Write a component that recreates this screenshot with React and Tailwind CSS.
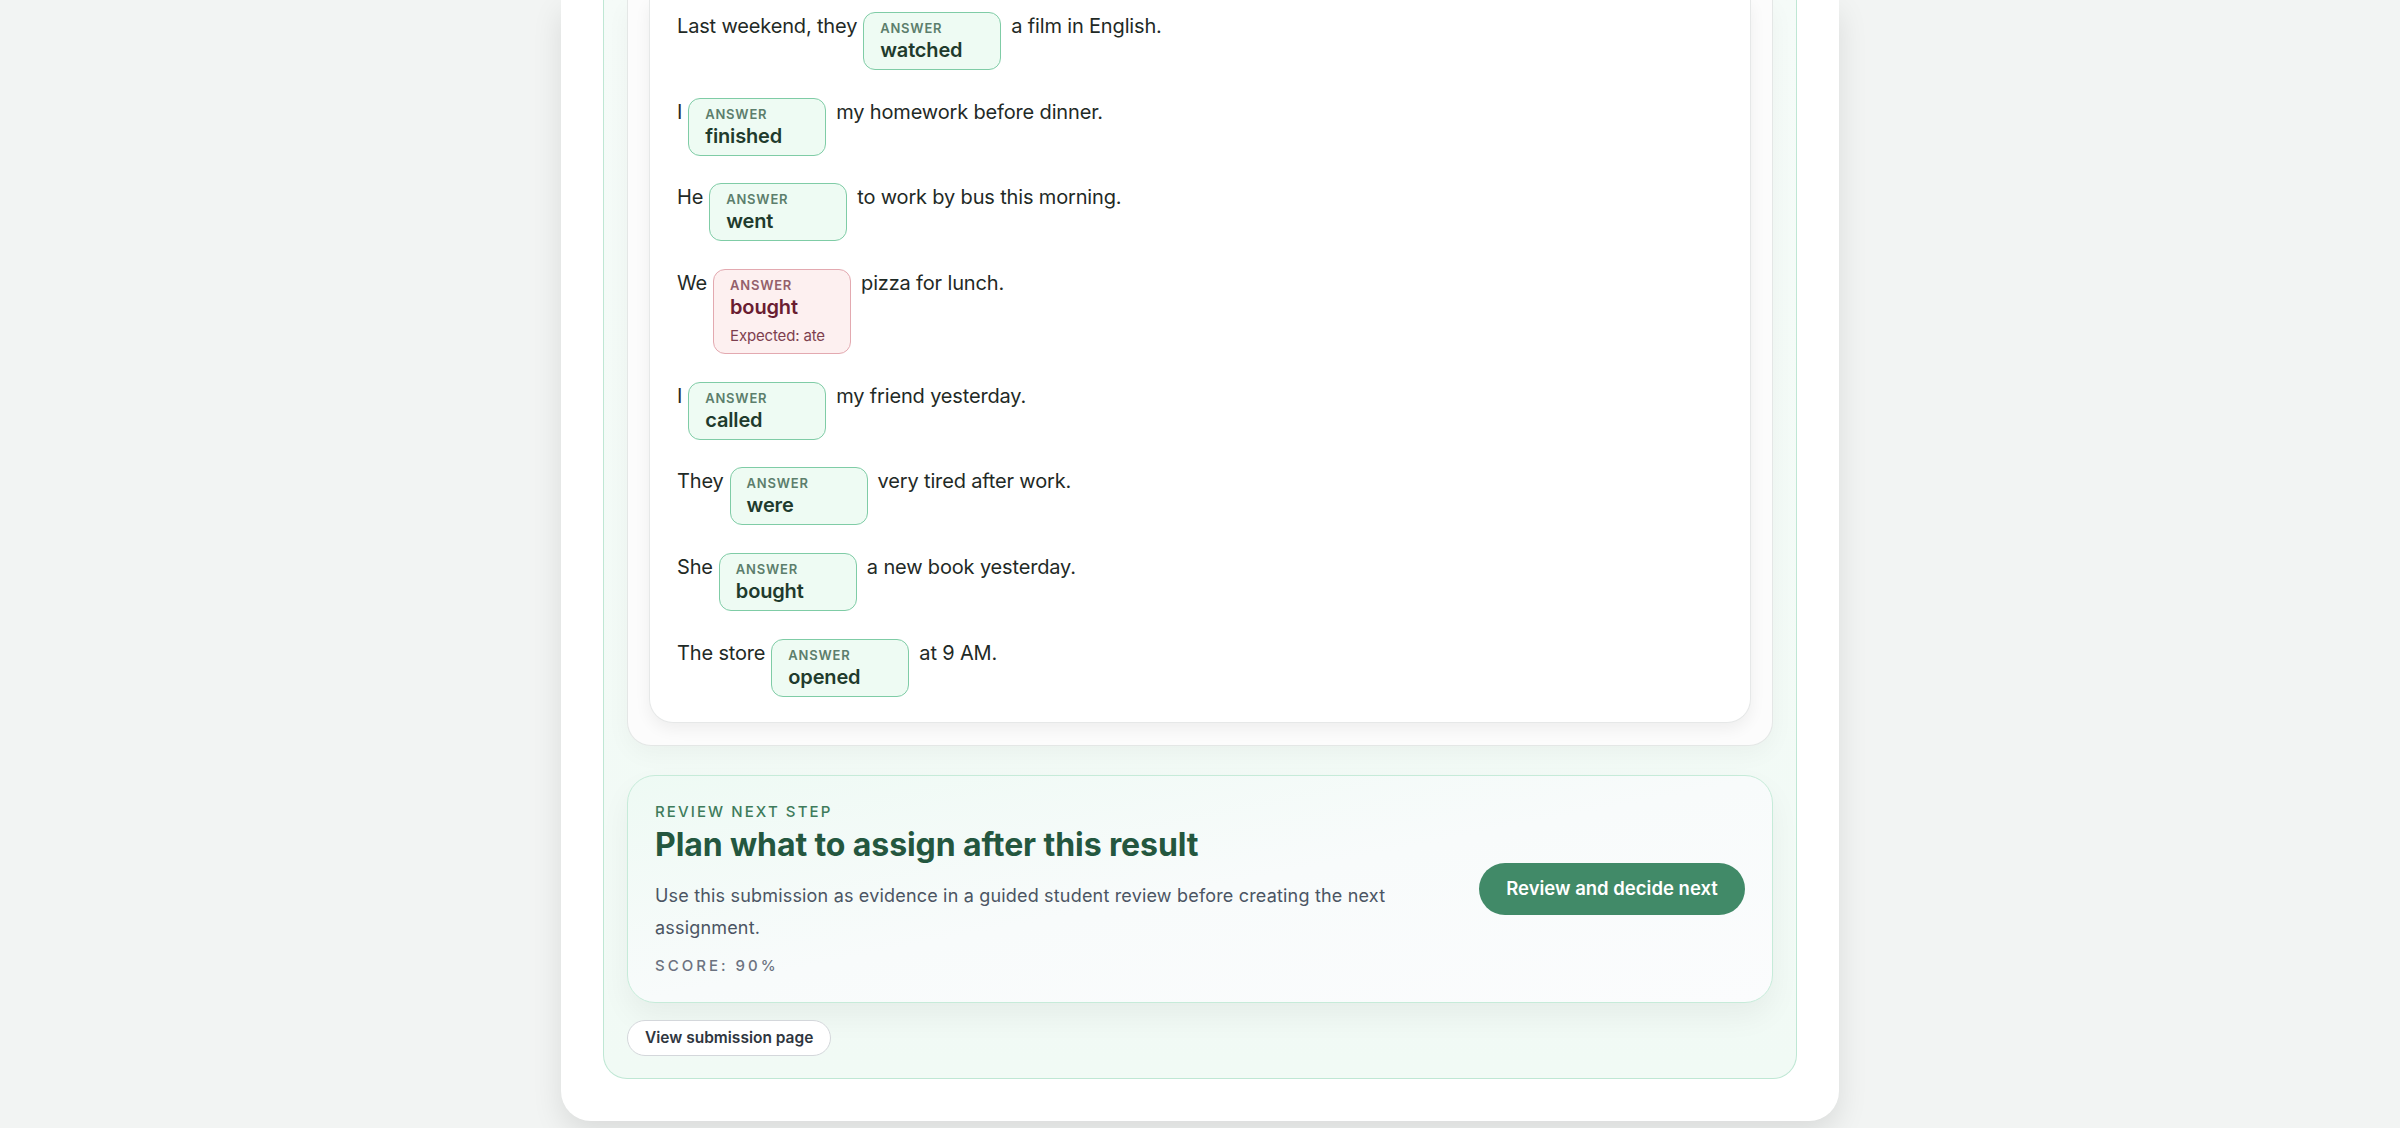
import React from 'react';

const sentences = [
  { before: 'Last weekend, they', answer: 'watched', after: 'a film in English.' },
  { before: 'I', answer: 'finished', after: 'my homework before dinner.' },
  { before: 'He', answer: 'went', after: 'to work by bus this morning.' },
  { before: 'We', answer: 'bought', after: 'pizza for lunch.', expected: 'ate' },
  { before: 'I', answer: 'called', after: 'my friend yesterday.' },
  { before: 'They', answer: 'were', after: 'very tired after work.' },
  { before: 'She', answer: 'bought', after: 'a new book yesterday.' },
  { before: 'The store', answer: 'opened', after: 'at 9 AM.' },
];

const AnswerChip = ({ answer, expected }) => {
  const wrong = Boolean(expected);
  return (
    <div
      className={
        wrong
          ? 'w-[138px] shrink-0 rounded-[12px] border border-[#e3a9b0] bg-[#fdf0f0] px-4 pt-[7px] pb-[6px] mr-1'
          : 'w-[138px] shrink-0 rounded-[12px] border border-[#7fcca6] bg-[#eefbf3] px-4 pt-[7px] pb-[6px] mr-1'
      }
    >
      <div
        className={
          wrong
            ? 'text-[13px] leading-4 font-semibold tracking-[0.06em] text-[#94606b]'
            : 'text-[13px] leading-4 font-semibold tracking-[0.06em] text-[#5c7e6c]'
        }
      >
        ANSWER
      </div>
      <div
        className={
          wrong
            ? 'mt-px text-[20px] leading-[26px] font-semibold text-[#6a1d31]'
            : 'mt-px text-[20px] leading-[26px] font-semibold text-[#1f3b2d]'
        }
      >
        {answer}
      </div>
      {wrong && (
        <div className="mt-[5px] text-[15px] leading-[22px] text-[#7d3f4f]">
          Expected: {expected}
        </div>
      )}
    </div>
  );
};

export default function App() {
  return (
    <div
      className="min-h-screen bg-[#f2f4f3] text-[#1f2a26]"
      style={{ fontFamily: 'Inter, "Noto Sans", sans-serif' }}
    >
      <div className="mx-auto w-[1278px] rounded-b-[30px] bg-white px-[42px] pb-[42px] shadow-[0_12px_30px_rgba(0,0,0,0.10)]">
        {/* submission block */}
        <div className="rounded-b-[24px] border-x border-b border-[#bfe7d4] bg-gradient-to-b from-[#f5fbf8] to-[#f1faf5] px-[23px] pb-[22px]">
          <div className="rounded-b-[24px] border-x border-b border-[#e4e7e6] bg-[#fcfcfc] px-[21px] pb-[22px] shadow-[0_8px_24px_rgba(0,0,0,0.04)]">
            <div className="rounded-b-[24px] border-x border-b border-[#e6e8e8] bg-white pl-[27px] pr-6 pt-3 pb-[25px] shadow-[0_6px_16px_rgba(0,0,0,0.06)]">
              <div className="flex flex-col gap-[27.7px]">
                {sentences.map((s, i) => (
                  <div
                    key={i}
                    className="flex flex-wrap items-start gap-1.5 text-[20px] leading-7 tracking-[-0.008em] text-[#1f2a26]"
                  >
                    <span>{s.before}</span>
                    <AnswerChip answer={s.answer} expected={s.expected} />
                    <span>{s.after}</span>
                  </div>
                ))}
              </div>
            </div>
          </div>

          {/* next step */}
          <div className="mt-[29px] flex items-center justify-between rounded-[28px] border border-[#c6ebd9] bg-gradient-to-br from-[#eefaf4] via-[#f8fbfb] to-[#fbfcfd] px-[27px] py-[26px] shadow-[0_14px_30px_rgba(0,0,0,0.05)]">
            <div className="max-w-[780px]">
              <div className="text-[15px] leading-5 font-medium tracking-[0.14em] text-[#3e7b5b]">
                REVIEW NEXT STEP
              </div>
              <h2 className="mt-[4px] text-[32px] leading-[38px] font-bold tracking-[-0.003em] text-[#24573f]">
                Plan what to assign after this result
              </h2>
              <p className="mt-4 text-[18px] leading-8 tracking-[0.01em] text-[#4b5563]">
                Use this submission as evidence in a guided student review before creating the next assignment.
              </p>
              <div className="mt-3 text-[15px] leading-5 font-medium tracking-[0.2em] text-[#6b7280]">
                SCORE: 90%
              </div>
            </div>
            <button className="h-[52px] w-[266px] rounded-full bg-[#418a68] text-[18.5px] font-semibold text-white">
              Review and decide next
            </button>
          </div>

          <button className="mt-[17px] rounded-full border border-[#d4d7db] bg-white px-[17px] py-[7px] text-[15.5px] leading-5 font-semibold text-[#2f3640]">
            View submission page
          </button>
        </div>
      </div>
    </div>
  );
}
